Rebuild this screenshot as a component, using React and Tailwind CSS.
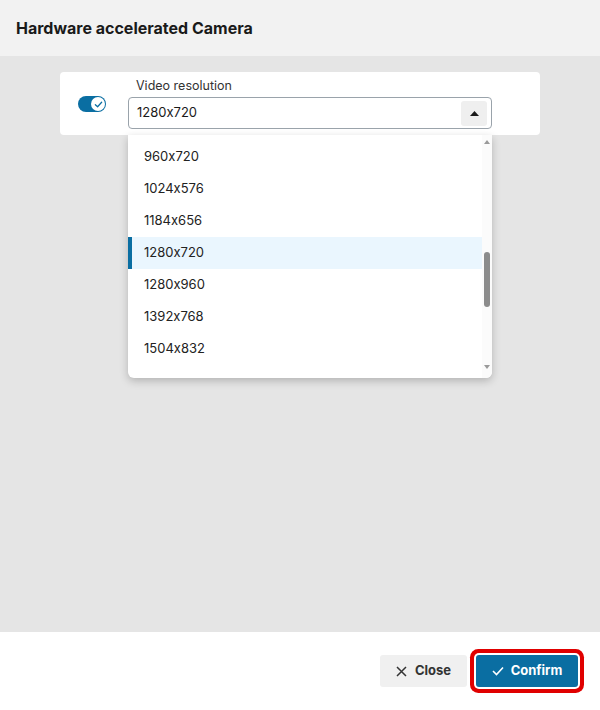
import React from "react";

const items = ["960x720", "1024x576", "1184x656", "1280x720", "1280x960", "1392x768", "1504x832"];

export default function App() {
  return (
    <div className="w-[600px] h-[710px] flex flex-col text-[#222] [font-feature-settings:'calt'_0]" style={{ fontFamily: "Inter, 'Noto Sans', sans-serif" }}>
      <div className="h-[56px] bg-[#f2f2f2] flex items-center px-4 shrink-0">
        <h1 className="text-[16px] font-bold text-[#1a1a1a]">Hardware accelerated Camera</h1>
      </div>
      <div className="flex-1 bg-[#e5e5e5] pt-4 flex flex-col items-center">
        <div className="w-[480px] h-[63px] bg-white rounded-[4px] flex items-start pl-[18px] pr-[48px] relative">
          <div className="mt-[24px] w-[28px] h-[16px] rounded-full bg-[#0a6ea2] flex items-center justify-end pr-[1px] shrink-0">
            <div className="w-[14px] h-[14px] rounded-full bg-white flex items-center justify-center">
              <svg width="9" height="9" viewBox="0 0 10 10" fill="none">
                <path d="M1.5 5.2 L4 7.5 L8.5 2.5" stroke="#0a6ea2" strokeWidth="1.4" strokeLinecap="round" strokeLinejoin="round" />
              </svg>
            </div>
          </div>
          <div className="ml-[22px] flex-1 flex flex-col">
            <div className="mt-[6px] ml-[8px] text-[12.5px] leading-[16px] text-[#333]">Video resolution</div>
            <div className="mt-[3px] h-[32px] border border-[#9aa3ab] rounded-[4px] flex items-center justify-between pl-[8px] pr-[4px]">
              <span className="text-[13px] text-[#1a1a1a]">1280x720</span>
              <div className="w-[26px] h-[25px] bg-[#efefef] rounded-[3px] flex items-center justify-center">
                <svg width="9" height="5" viewBox="0 0 9 5"><path d="M0 5 L4.5 0 L9 5 Z" fill="#1a1a1a" /></svg>
              </div>
            </div>
          </div>
          <div className="absolute left-[68px] top-[63px] w-[364px] h-[243px] bg-white rounded-b-[6px] shadow-[0_3px_8px_rgba(0,0,0,0.22)] flex z-10">
            <div className="flex-1 flex flex-col pt-[6px]">
              {items.map((it) => {
                const sel = it === "1280x720";
                return (
                  <div
                    key={it}
                    className={
                      sel
                        ? "h-[32px] flex items-center pl-[12px] border-l-4 border-[#0a6ea2] bg-[#eaf6fe] text-[13px] text-[#222]"
                        : "h-[32px] flex items-center pl-[16px] text-[13px] text-[#222]"
                    }
                  >
                    {it}
                  </div>
                );
              })}
            </div>
            <div className="w-[10px] flex flex-col items-center pt-[5px] pb-[9px] bg-[#fbfbfb] rounded-br-[6px]">
              <svg width="6" height="4" viewBox="0 0 6 4"><path d="M0 4 L3 0 L6 4 Z" fill="#9a9a9a" /></svg>
              <div className="flex-1 w-full flex flex-col items-center">
                <div className="mt-[108px] w-[6px] h-[55px] rounded-full bg-[#8c8c8c]" />
              </div>
              <svg width="6" height="4" viewBox="0 0 6 4"><path d="M0 0 L6 0 L3 4 Z" fill="#9a9a9a" /></svg>
            </div>
          </div>
        </div>
      </div>
      <div className="h-[78px] bg-white shrink-0 flex items-center justify-end gap-[9px] pr-[22px]">
        <button className="h-[32px] w-[87px] bg-[#f0f0f0] rounded-[3px] flex items-center justify-center gap-[8px] text-[13px] font-bold text-[#333]">
          <svg width="11" height="11" viewBox="0 0 11 11"><path d="M1 1 L10 10 M10 1 L1 10" stroke="#333" strokeWidth="1.5" /></svg>
          Close
        </button>
        <button className="h-[32px] w-[102px] bg-[#0a6ea2] rounded-[3px] flex items-center justify-center gap-[7px] text-[13px] font-bold text-white shadow-[0_0_0_2px_#fff,0_0_0_6px_#e00000]">
          <svg width="12" height="10" viewBox="0 0 12 10" fill="none"><path d="M1 5 L4.5 8.5 L11 1.5" stroke="#fff" strokeWidth="1.6" /></svg>
          Confirm
        </button>
      </div>
    </div>
  );
}
